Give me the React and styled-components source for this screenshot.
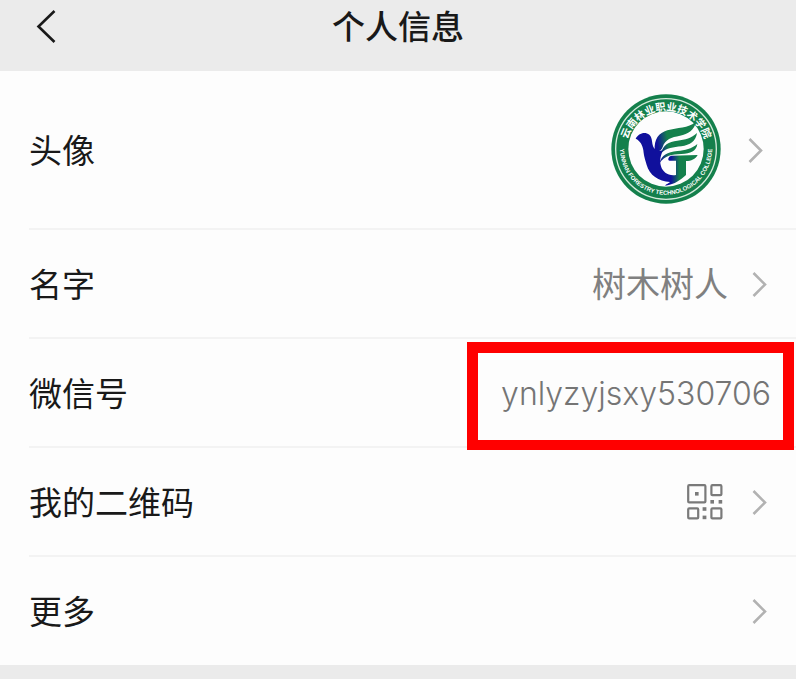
import React from "react";
import styled, { createGlobalStyle } from "styled-components";

const GlobalStyle = createGlobalStyle`
	body {
		margin: 0;
		background-color: #ebebeb;
		color: #191919;
		font-family: Inter, "Noto Sans CJK SC", sans-serif;
		font-size: 33px;
		line-height: 48px;
	}
`;

const Header = styled.header`
	display: grid;
	grid-template-columns: 64px 1fr 64px;
	align-items: center;
	height: 71px;
	padding-bottom: 18px;
	box-sizing: border-box;
	background-color: #ebebeb;
`;

const BackButton = styled.button`
	display: flex;
	justify-content: flex-end;
	align-items: center;
	height: 48px;
	padding: 0 8px 0 0;
	border: 0;
	background: none;
	color: #191919;
`;

const Title = styled.h1`
	margin: 0;
	font-size: 33px;
	font-weight: 500;
	text-align: center;
`;

const List = styled.ul`
	margin: 0;
	padding: 0 0 0 29px;
	list-style: none;
	background-color: #fdfdfd;
`;

const Row = styled.li`
	position: relative;
	display: flex;
	align-items: center;
	min-height: ${(props) => (props.$tall ? "159px" : "109px")};
	padding-right: ${(props) => props.$inset || 29}px;
	box-sizing: border-box;
	border-bottom: 2px solid #f3f3f3;

	&:last-child {
		min-height: 108px;
		border-bottom: 0;
	}
`;

const Label = styled.span`
	flex: 1;
	padding-top: 2px;
`;

const Value = styled.span`
	padding-top: 2px;
	color: ${(props) => (props.$latin ? "#757575" : "#808080")};
	font-size: ${(props) => (props.$latin ? "32px" : "34px")};
	font-weight: ${(props) => (props.$latin ? 300 : 400)};
`;

const Avatar = styled.span`
	display: flex;
	margin: 0 3px 2px 0;
`;

const QrCode = styled.span`
	display: flex;
	margin-right: 5px;
	color: #7a7a7a;
`;

const Arrow = styled.span`
	display: flex;
	margin-left: 24px;
	color: #b2b2b2;
`;

const Highlight = styled.span`
	position: absolute;
	top: 3px;
	right: 2px;
	width: 327px;
	height: 108px;
	box-sizing: border-box;
	border: 11px solid #ff0000;
	border-bottom-width: 10px;
	pointer-events: none;
`;

const Chevron = () => (
	<Arrow>
		<svg width="15" height="26" viewBox="0 0 15 26" fill="none" stroke="currentColor" strokeWidth="2.6">
			<path d="M1.5 2L13 13.5L1.5 25" />
		</svg>
	</Arrow>
);

const BackIcon = () => (
	<svg width="20" height="34" viewBox="0 0 20 34" fill="none" stroke="currentColor" strokeWidth="2.6">
		<path d="M18.5 1L2.5 16.5L18.5 32" />
	</svg>
);

const QrIcon = () => (
	<svg width="36" height="36" viewBox="0 0 36 36" fill="none" stroke="currentColor" strokeWidth="2.2">
		<rect x="1.2" y="1.2" width="17.2" height="17.2" rx="1" />
		<rect x="24.4" y="1.2" width="10" height="10" rx="1" />
		<rect x="1.2" y="24.4" width="10" height="10" rx="1" />
		<rect x="24.4" y="24.4" width="10" height="10" rx="1" />
		<g fill="currentColor" stroke="none">
			<rect x="8" y="8" width="3.6" height="3.6" />
			<rect x="23.4" y="16" width="3.6" height="3.6" />
			<rect x="31.6" y="16" width="3.6" height="3.6" />
			<rect x="15.6" y="23.2" width="3.8" height="3.6" />
			<rect x="15.6" y="31.6" width="3.8" height="3.6" />
		</g>
	</svg>
);

const SchoolLogo = () => (
	<svg width="110" height="110" viewBox="-165 -165 330 330" role="img" aria-label="头像">
		<defs>
			<path id="arc-top" d="M-119 20A120 120 0 1 1 119 20" />
			<path id="arc-bottom" d="M-136 -24A138 138 0 1 0 136 -24" />
			<linearGradient id="wing" x1="-40" x2="40" y1="0" y2="-12" gradientUnits="userSpaceOnUse">
				<stop offset="0.2" stopColor="#10109c" />
				<stop offset="0.6" stopColor="#14804c" />
			</linearGradient>
			<linearGradient id="body" x1="-40" x2="60" y1="60" y2="60" gradientUnits="userSpaceOnUse">
				<stop offset="0.55" stopColor="#10109c" />
				<stop offset="0.8" stopColor="#14804c" />
			</linearGradient>
		</defs>
		<circle r="164" fill="#14804c" />
		<circle r="151" fill="none" stroke="#d5eadc" strokeWidth="4" />
		<circle r="113" fill="#fdfdfd" />
		<g fill="#fdfdfd" textAnchor="middle" fontWeight="700">
			<text fontSize="31" fontFamily='"Noto Sans CJK SC", sans-serif'>
				<textPath href="#arc-top" startOffset="50%">云南林业职业技术学院</textPath>
			</text>
			<text fontSize="18" fontFamily='"Liberation Sans", sans-serif'>
				<textPath href="#arc-bottom" startOffset="50%">YUNNAN FORESTRY TECHNOLOGICAL COLLEGE</textPath>
			</text>
		</g>
		<path
			fill="url(#body)"
			d="M-91 -31C-84 -46 -64 -54 -50 -43C-38 -32 -45 -12 -34 -1C-28 7 -14 8 -8 1C-16 20 -20 34 -15 52C-10 70 8 82 30 78L30 35L11 35C4 35 6 22 16 20L95 18C88 30 76 36 60 36L60 78C44 92 28 106 -2 110C-2 106 8 104 12 99C-22 98 -50 78 -58 48C-63 30 -66 24 -68 4C-70 -12 -78 -25 -91 -31Z"
		/>
		<path
			fill="url(#wing)"
			d="M-34 4C-36 -30 -22 -48 4 -56C34 -65 66 -62 90 -82C86 -58 66 -45 42 -40C16 -35 -2 -30 -10 -6C-14 6 -24 10 -34 4Z"
		/>
		<path fill="url(#wing)" d="M-14 12C-10 -12 8 -22 34 -25C58 -28 76 -32 93 -48C90 -24 72 -12 46 -8C22 -5 2 -4 -14 12Z" />
		<path fill="url(#wing)" d="M-19 42C-14 18 4 9 34 6C58 4 76 0 94 -15C91 6 74 14 46 15C18 16 -4 20 -19 42Z" />
	</svg>
);

const rows = [
	{ label: "头像", tall: true, inset: 33, content: <Avatar><SchoolLogo /></Avatar> },
	{ label: "名字", content: <Value>树木树人</Value> },
	{ label: "微信号", inset: 25, content: <Value $latin>ynlyzyjsxy530706</Value>, highlighted: true },
	{ label: "我的二维码", content: <QrCode><QrIcon /></QrCode> },
	{ label: "更多" },
];

export default function App() {
	return (
		<>
			<GlobalStyle />
			<Header>
				<BackButton type="button" aria-label="返回">
					<BackIcon />
				</BackButton>
				<Title>个人信息</Title>
			</Header>
			<List>
				{rows.map((row) => (
					<Row key={row.label} $tall={row.tall} $inset={row.inset}>
						<Label>{row.label}</Label>
						{row.content}
						{row.highlighted ? <Highlight /> : <Chevron />}
					</Row>
				))}
			</List>
		</>
	);
}
